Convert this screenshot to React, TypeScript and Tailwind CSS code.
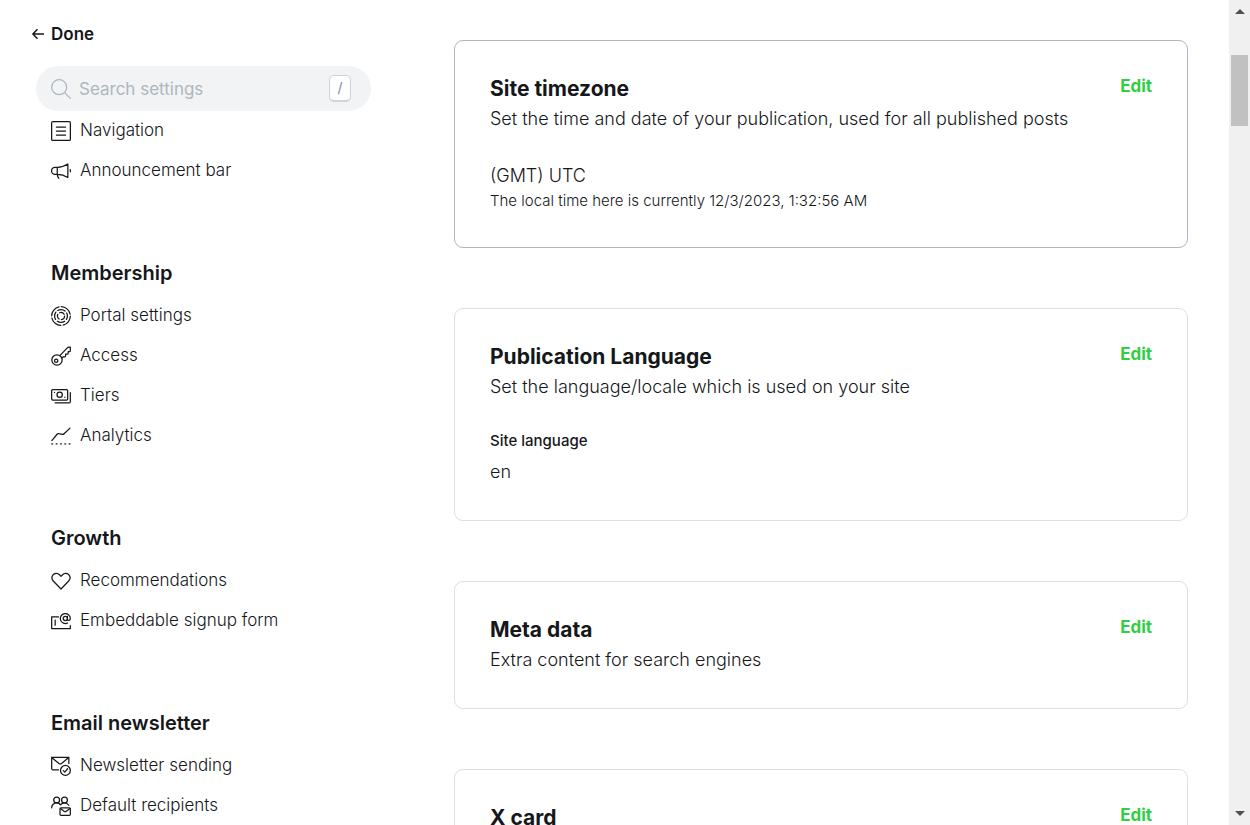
import type { ReactNode } from 'react';

function Icon({ children }: { children: ReactNode }) {
  return (
    <svg
      viewBox="0 0 24 24"
      className="size-5 shrink-0"
      fill="none"
      stroke="currentColor"
      strokeWidth="1.5"
      strokeLinecap="round"
      strokeLinejoin="round"
      aria-hidden="true"
    >
      {children}
    </svg>
  );
}

const icons = {
  navigation: (
    <Icon>
      <rect x="0.75" y="0.75" width="22.5" height="22.5" rx="1.5" />
      <path d="M6.5 7.2h11M6.5 12h11M6.5 16.8h11" />
    </Icon>
  ),
  megaphone: (
    <Icon>
      <path d="M7.5 7.5H4.9a4.1 4.1 0 0 0 0 8.5h2.6V7.5c4.6 0 8.8-1.3 12.7-3.9v16.3c-3.9-2.6-8.1-3.9-12.7-3.9M7.5 16c.1 1.8.7 3.4 1.9 4.8M23.2 10.3v2.7" />
    </Icon>
  ),
  portal: (
    <Icon>
      <circle cx="12" cy="12" r="11.2" strokeDasharray="14.8 2.8" />
      <circle cx="12" cy="12" r="7.7" strokeDasharray="9.3 2.8" strokeDashoffset="5" />
      <circle cx="12" cy="12" r="4.3" strokeDasharray="6.2 2.8" />
    </Icon>
  ),
  key: (
    <Icon>
      <path d="M10.6 11.6 19.6 2.2c.5-.5 1.1-.8 1.8-.8h1.8v4.2c0 .7-.4 1.1-1.1 1.1h-1.5v2c0 .7-.4 1.1-1.1 1.1h-2v2c0 .7-.4 1.1-1.1 1.1h-1.6l-1.7 1.5" />
      <circle cx="7.2" cy="16.7" r="6.2" />
      <circle cx="6.2" cy="17.7" r="2" />
    </Icon>
  ),
  tiers: (
    <Icon>
      <rect x="0.8" y="4.2" width="19.2" height="12.6" rx="1.3" />
      <circle cx="10.4" cy="10.5" r="3.2" />
      <path d="M4.2 7.5v.2M16.6 13.3v.2M23.2 8v10.8c0 .8-.6 1.4-1.4 1.4H5" />
    </Icon>
  ),
  analytics: (
    <Icon>
      <path d="m1 17.5 6.3-7.6c.5-.6 1.3-.9 2.1-.7l4.2.8c.8.2 1.6-.1 2.1-.7L22.8 2.5M1 21.5h1M6.2 21.5h1M11.4 21.5h1M16.6 21.5h1M21.8 21.5h1" />
    </Icon>
  ),
  heart: (
    <Icon>
      <path d="m12 21.6-9-9.3C.9 10.1.7 7.1 2.2 5c1.9-2.6 5.8-2.8 8-.5L12 6.4l1.8-1.9c2.2-2.3 6.1-2.1 8 .5 1.5 2.1 1.3 5.1-.8 7.3L12 21.6Z" />
    </Icon>
  ),
  embed: (
    <Icon>
      <path d="M9 7H.8v14h22.4v-3.5M5 11v6" />
      <circle cx="17.2" cy="9" r="2.5" />
      <path d="M19.7 6.5v3.4c0 2.3 3.5 1.9 3.5-.9a6 6 0 1 0-3.3 5.4" />
    </Icon>
  ),
  mailCheck: (
    <Icon>
      <path d="M9 16.5H2.2c-.8 0-1.4-.6-1.4-1.4V1.6h20.6V9M.8 1.8l8.7 7.1c1 .7 2.2.7 3.2 0l8.5-7.1" />
      <circle cx="17.3" cy="17.3" r="5.9" />
      <path d="m14.7 17.5 1.8 1.8 3.4-4" />
    </Icon>
  ),
  recipients: (
    <Icon>
      <circle cx="6.8" cy="4.7" r="3.5" />
      <circle cx="16.2" cy="4.7" r="3.5" />
      <path d="M.8 14.2c0-3.3 2.7-6 6-6 1.9 0 3.6.9 4.7 2.3 1.1-1.4 2.8-2.3 4.7-2.3 2.2 0 4.1 1.2 5.2 2.9" />
      <rect x="10.8" y="14.3" width="12.4" height="8.9" rx="1.2" />
      <path d="m11.2 15 4.9 3.5c.6.4 1.3.4 1.9 0l4.8-3.5" />
    </Icon>
  ),
};

const sections = [
  {
    title: 'Membership',
    items: [
      { label: 'Portal settings', icon: icons.portal },
      { label: 'Access', icon: icons.key },
      { label: 'Tiers', icon: icons.tiers },
      { label: 'Analytics', icon: icons.analytics },
    ],
  },
  {
    title: 'Growth',
    items: [
      { label: 'Recommendations', icon: icons.heart },
      { label: 'Embeddable signup form', icon: icons.embed },
    ],
  },
  {
    title: 'Email newsletter',
    items: [
      { label: 'Newsletter sending', icon: icons.mailCheck },
      { label: 'Default recipients', icon: icons.recipients },
    ],
  },
];

function NavItem({ label, icon }: { label: string; icon: ReactNode }) {
  return (
    <li>
      <a href="#" className="flex h-10 items-center gap-[9px] text-[17px] font-light">
        {icon}
        <span>{label}</span>
      </a>
    </li>
  );
}

function Sidebar() {
  return (
    <aside className="flex w-[371px] shrink-0 flex-col pl-9">
      <button
        type="button"
        className="mt-[22px] -ml-1 flex items-center gap-[7px] self-start text-[17px] leading-6 font-semibold"
      >
        <svg viewBox="0 0 12 12" className="size-3" fill="none" stroke="currentColor" strokeWidth="1.5" aria-hidden="true">
          <path d="M5.5 1.2.9 6l4.6 4.8M1 6h11" strokeLinejoin="round" />
        </svg>
        Done
      </button>
      <label className="mt-5 flex h-[45px] shrink-0 items-center gap-2 rounded-full bg-[#f1f3f4] pr-5 pl-[15px] text-[#aeb7c1]">
        <Icon>
          <circle cx="9.8" cy="9.8" r="9" />
          <path d="m16.3 16.3 7 7" />
        </Icon>
        <input
          type="text"
          placeholder="Search settings"
          aria-label="Search settings"
          className="h-full min-w-0 flex-1 bg-transparent pt-px text-[17px] text-[#15171a] outline-none placeholder:text-[#aeb7c1]"
        />
        <kbd className="flex h-[27px] w-[22px] items-center justify-center rounded-[5px] border border-b-2 border-[#ced4d9] bg-white font-['Inter',sans-serif] text-sm text-[#7c8b9a]">
          /
        </kbd>
      </label>
      <nav aria-label="Settings" className="pl-[15px]">
        <ul>
          <NavItem label="Navigation" icon={icons.navigation} />
          <NavItem label="Announcement bar" icon={icons.megaphone} />
        </ul>
        {sections.map((section) => (
          <section key={section.title} className="mt-[60px]">
            <h2 className="mb-0.5 flex h-[43px] items-center text-xl font-semibold">{section.title}</h2>
            <ul>
              {section.items.map((item) => (
                <NavItem key={item.label} label={item.label} icon={item.icon} />
              ))}
            </ul>
          </section>
        ))}
      </nav>
    </aside>
  );
}

function Card({
  title,
  description,
  active = false,
  children,
}: {
  title: string;
  description?: string;
  active?: boolean;
  children?: ReactNode;
}) {
  return (
    <section
      className={`shrink-0 rounded-[9px] border p-[35px] ${active ? 'border-[#aeb7c1]' : 'border-[#dddfe2]'}`}
    >
      <header className="flex items-start justify-between">
        <div>
          <h2 className="text-[21px] leading-[26px] font-bold">{title}</h2>
          {description && <p className="mt-1 text-lg leading-[26px] font-light">{description}</p>}
        </div>
        <button type="button" className="text-[17px] leading-5 font-bold text-[#30cf43]">
          Edit
        </button>
      </header>
      {children && <div className="mt-[31px]">{children}</div>}
    </section>
  );
}

function Scrollbar() {
  return (
    <div className="flex w-[21px] shrink-0 flex-col items-center bg-[#f0f0f0]" aria-hidden="true">
      <svg viewBox="0 0 10 5" className="mt-[9px] h-[5px] w-2.5 shrink-0" fill="#505050">
        <path d="M5 0 10 5H0Z" />
      </svg>
      <div className="mt-[41px] h-[71px] w-[17px] shrink-0 bg-[#c1c1c1]" />
      <svg viewBox="0 0 10 5" className="mt-auto mb-[9px] h-[5px] w-2.5 shrink-0" fill="#505050">
        <path d="M0 0h10L5 5Z" />
      </svg>
    </div>
  );
}

export default function App() {
  return (
    <div className="flex h-screen overflow-hidden bg-white font-['Inter',sans-serif] text-[#15171a]">
      <Sidebar />
      <main className="flex min-w-0 flex-1 flex-col gap-[60px] pt-10 pr-[41px] pl-[83px]">
        <Card
          title="Site timezone"
          description="Set the time and date of your publication, used for all published posts"
          active
        >
          <p className="text-lg leading-[26px] font-light">(GMT) UTC</p>
          <p className="text-[15px] leading-[23px] font-light">
            The local time here is currently 12/3/2023, 1:32:56 AM
          </p>
        </Card>
        <Card title="Publication Language" description="Set the language/locale which is used on your site">
          <h3 className="text-[15px] leading-5 font-medium">Site language</h3>
          <p className="mt-2 text-lg leading-[26px] font-light">en</p>
        </Card>
        <Card title="Meta data" description="Extra content for search engines" />
        <Card title="X card" />
      </main>
      <Scrollbar />
    </div>
  );
}
